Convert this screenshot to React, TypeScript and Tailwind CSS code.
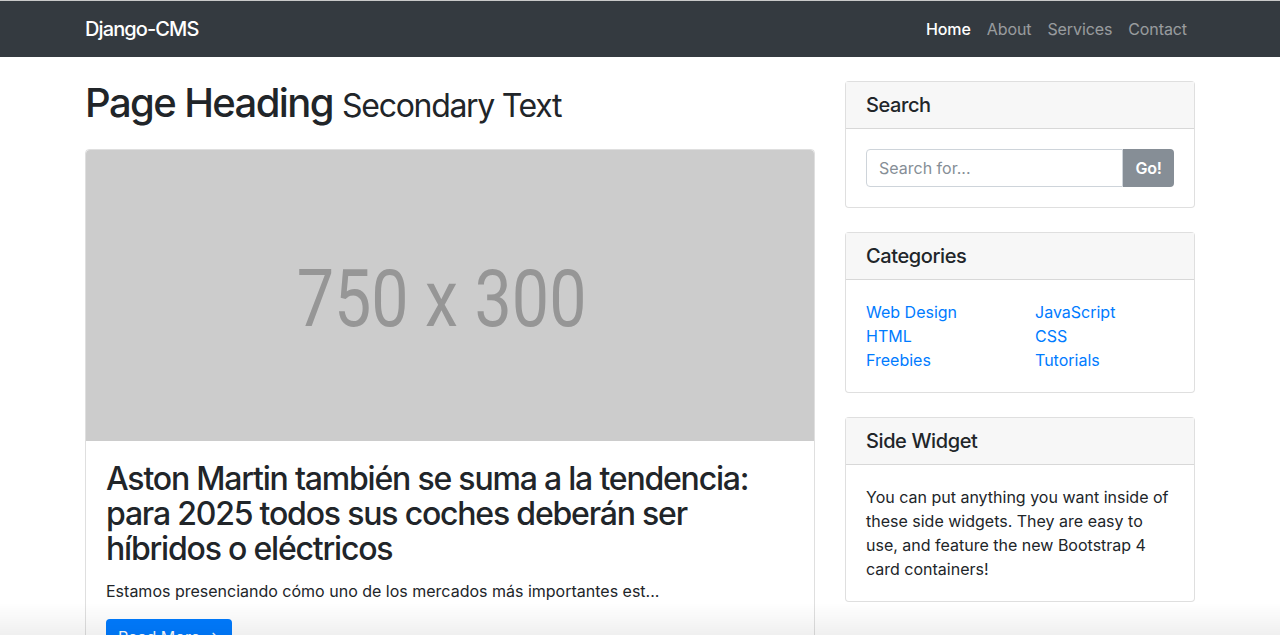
const font = { fontFamily: "Inter, 'Noto Sans', 'Liberation Sans', sans-serif" };

const navLinks = ["Home", "About", "Services", "Contact"];
const categories = [
  ["Web Design", "HTML", "Freebies"],
  ["JavaScript", "CSS", "Tutorials"],
];

function SideCard({ title, children }: { title: string; children: React.ReactNode }) {
  return (
    <div className="mt-6 rounded border border-black/[0.125] bg-white">
      <h5 className="border-b border-black/[0.125] bg-[#f7f7f7] px-5 py-3 text-[20px] font-medium leading-[22px] tracking-[-0.4px] text-[#212529]">
        {title}
      </h5>
      <div className="p-5">{children}</div>
    </div>
  );
}

export default function App() {
  return (
    <div className="relative min-h-[635px] bg-white text-[#212529]" style={font}>
      {/* NAVBAR */}
      <nav className="border-t border-[#c9c9c9] bg-[#343a40]">
        <div className="mx-auto flex h-14 max-w-[1140px] items-center justify-between px-[15px]">
          <span className="text-[20px] font-medium tracking-[-0.9px] text-white">Django-CMS</span>
          <div className="flex items-center">
            {navLinks.map((l, i) => (
              <span
                key={l}
                className={`px-2 text-[16px] tracking-[-0.1px] ${i === 0 ? "font-medium text-white" : "text-white/50"}`}
              >
                {l}
              </span>
            ))}
          </div>
        </div>
      </nav>

      <div className="mx-auto flex max-w-[1140px]">
        {/* MAIN COLUMN */}
        <div className="w-[760px] px-[15px]">
          <h1 className="my-6 h-[44px] text-[40px] font-medium leading-[44px] tracking-[-1.6px]">
            Page Heading{" "}
            <small className="text-[32px] font-normal leading-none tracking-[-1.3px]">Secondary Text</small>
          </h1>

          <div className="rounded border border-black/[0.125]">
            <div className="flex h-[291px] items-center justify-center rounded-t bg-[#cccccc] pr-4 pt-[6px]">
              <span
                className="inline-block scale-x-[0.83] text-[80px] leading-none text-[#969696]"
                style={{ fontFamily: "Roboto, 'Liberation Sans', sans-serif" }}
              >
                750 x 300
              </span>
            </div>
            <div className="p-5">
              <h2 className="mb-3 text-[32px] font-medium leading-[35.2px] tracking-[-1.2px]">
                Aston Martin también se suma a la tendencia: para 2025 todos sus coches deberán ser híbridos o eléctricos
              </h2>
              <p className="mb-4 text-[16px] leading-6">
                Estamos presenciando cómo uno de los mercados más importantes est...
              </p>
              <button className="rounded bg-[#007bff] px-3 py-1.5 text-[16px] leading-6 text-white">
                Read More &rarr;
              </button>
            </div>
          </div>
        </div>

        {/* SIDEBAR */}
        <div className="w-[380px] px-[15px]">
          <SideCard title="Search">
            <div className="flex">
              <input
                className="h-[38px] w-0 min-w-0 flex-1 rounded-l border border-[#ced4da] px-3 text-[16px] text-[#495057] outline-none placeholder:text-[#868e96]"
                placeholder="Search for..."
                style={font}
              />
              <button className="h-[38px] w-[51px] shrink-0 rounded-r bg-[#868e96] text-[16px] font-semibold tracking-[-0.3px] text-white">
                Go!
              </button>
            </div>
          </SideCard>

          <SideCard title="Categories">
            <div className="-mx-[15px] flex">
              {categories.map((col, i) => (
                <ul key={i} className="w-1/2 px-[15px]">
                  {col.map((c) => (
                    <li key={c} className="text-[16px] leading-6 text-[#007bff]">
                      {c}
                    </li>
                  ))}
                </ul>
              ))}
            </div>
          </SideCard>

          <SideCard title="Side Widget">
            <p className="text-[16px] leading-6">
              You can put anything you want inside of these side widgets. They are easy to use, and feature the new
              Bootstrap 4 card containers!
            </p>
          </SideCard>
        </div>
      </div>

      {/* window shadow at the bottom edge of the capture */}
      <div className="pointer-events-none fixed inset-x-0 bottom-0 h-8 bg-gradient-to-b from-transparent to-black/[0.06]" />
    </div>
  );
}
